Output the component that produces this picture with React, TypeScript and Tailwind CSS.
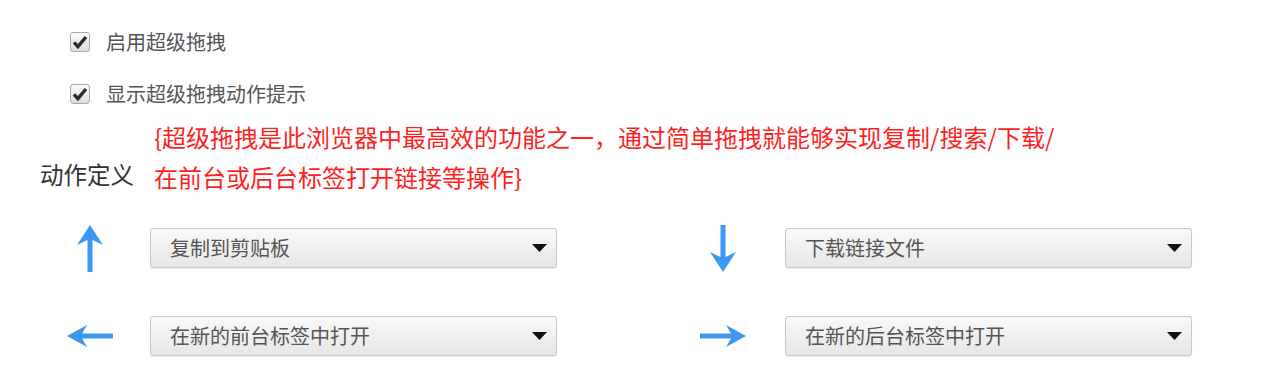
import React from "react";

const font = { fontFamily: '"Microsoft YaHei", "Noto Sans CJK SC", "Noto Sans", sans-serif' };

const Checkbox = () => (
  <span className="flex h-[20px] w-[20px] items-center justify-center rounded-[3px] border border-[#a9a9a9] bg-gradient-to-b from-[#fbfbfb] to-[#dedede] shadow-[inset_0_1px_0_#fff]">
    <svg viewBox="0 0 16 16" className="h-[16px] w-[16px]">
      <path d="M2 8.4 L5.9 12.6 L14 3" fill="none" stroke="#2b2b2b" strokeWidth="3.4" strokeLinejoin="miter" strokeLinecap="butt" />
    </svg>
  </span>
);

const ArrowUp = () => (
  <svg width="26" height="47" viewBox="0 0 26 47">
    <path d="M13 0 L26 20 L15.5 15 L15.5 47 L10.5 47 L10.5 15 L0 20 Z" fill="#3b99f4" />
  </svg>
);

const ArrowDown = () => (
  <svg width="26" height="47" viewBox="0 0 26 47">
    <path d="M13 47 L26 27 L15.5 32 L15.5 0 L10.5 0 L10.5 32 L0 27 Z" fill="#3b99f4" />
  </svg>
);

const ArrowLeft = () => (
  <svg width="46" height="22" viewBox="0 0 46 22">
    <path d="M0 11 L20 0 L15 8.5 L46 8.5 L46 13.5 L15 13.5 L20 22 Z" fill="#3b99f4" />
  </svg>
);

const ArrowRight = () => (
  <svg width="46" height="22" viewBox="0 0 46 22">
    <path d="M46 11 L26 0 L31 8.5 L0 8.5 L0 13.5 L31 13.5 L26 22 Z" fill="#3b99f4" />
  </svg>
);

const Select = ({ label }: { label: string }) => (
  <div className="flex h-[40px] w-[407px] items-center justify-between rounded-[3px] border border-[#c6c6c6] bg-gradient-to-b from-[#f9f9f9] to-[#e6e6e6] pl-[19px] pr-[9px] shadow-[0_1px_1px_rgba(0,0,0,0.08)]">
    <span className="text-[20px] leading-none text-[#555]">{label}</span>
    <svg width="15" height="8" viewBox="0 0 15 8">
      <path d="M0 0 L15 0 L7.5 8 Z" fill="#111" />
    </svg>
  </div>
);

const actions = [
  { icon: <ArrowUp />, label: "复制到剪贴板", gap: "ml-[30px]" },
  { icon: <ArrowDown />, label: "下载链接文件", gap: "ml-[32px]" },
  { icon: <ArrowLeft />, label: "在新的前台标签中打开", gap: "ml-[30px]" },
  { icon: <ArrowRight />, label: "在新的后台标签中打开", gap: "ml-[32px]" },
];

export default function App() {
  return (
    <div className="h-[388px] w-[1268px] overflow-hidden bg-white pt-[22px]" style={font}>
      {/* options */}
      <div className="flex h-[40px] items-center gap-[16px] pl-[70px]">
        <Checkbox />
        <span className="text-[20px] text-[#555]">启用超级拖拽</span>
      </div>
      <div className="mt-[12px] flex h-[40px] items-center gap-[16px] pl-[70px]">
        <Checkbox />
        <span className="text-[20px] text-[#555]">显示超级拖拽动作提示</span>
      </div>

      {/* definition heading */}
      <div className="mt-[3px] flex items-end gap-[20px] pl-[40px]">
        <span className="pb-[3px] text-[23.5px] leading-[40px] text-[#333]">动作定义</span>
        <div className="text-[24px] leading-[40px] text-[#ff1f1f]">
          <div>{"{超级拖拽是此浏览器中最高效的功能之一，通过简单拖拽就能够实现复制/搜索/下载/"}</div>
          <div>{"在前台或后台标签打开链接等操作}"}</div>
        </div>
      </div>

      {/* action selects */}
      <div className="mt-[31px] grid grid-cols-[633px_1fr] gap-y-[48px] pl-[60px]">
        {actions.map((a) => (
          <div key={a.label} className="flex h-[40px] items-center">
            <div className="flex h-[40px] w-[60px] items-center justify-center">{a.icon}</div>
            <div className={a.gap}>
              <Select label={a.label} />
            </div>
          </div>
        ))}
      </div>
    </div>
  );
}
